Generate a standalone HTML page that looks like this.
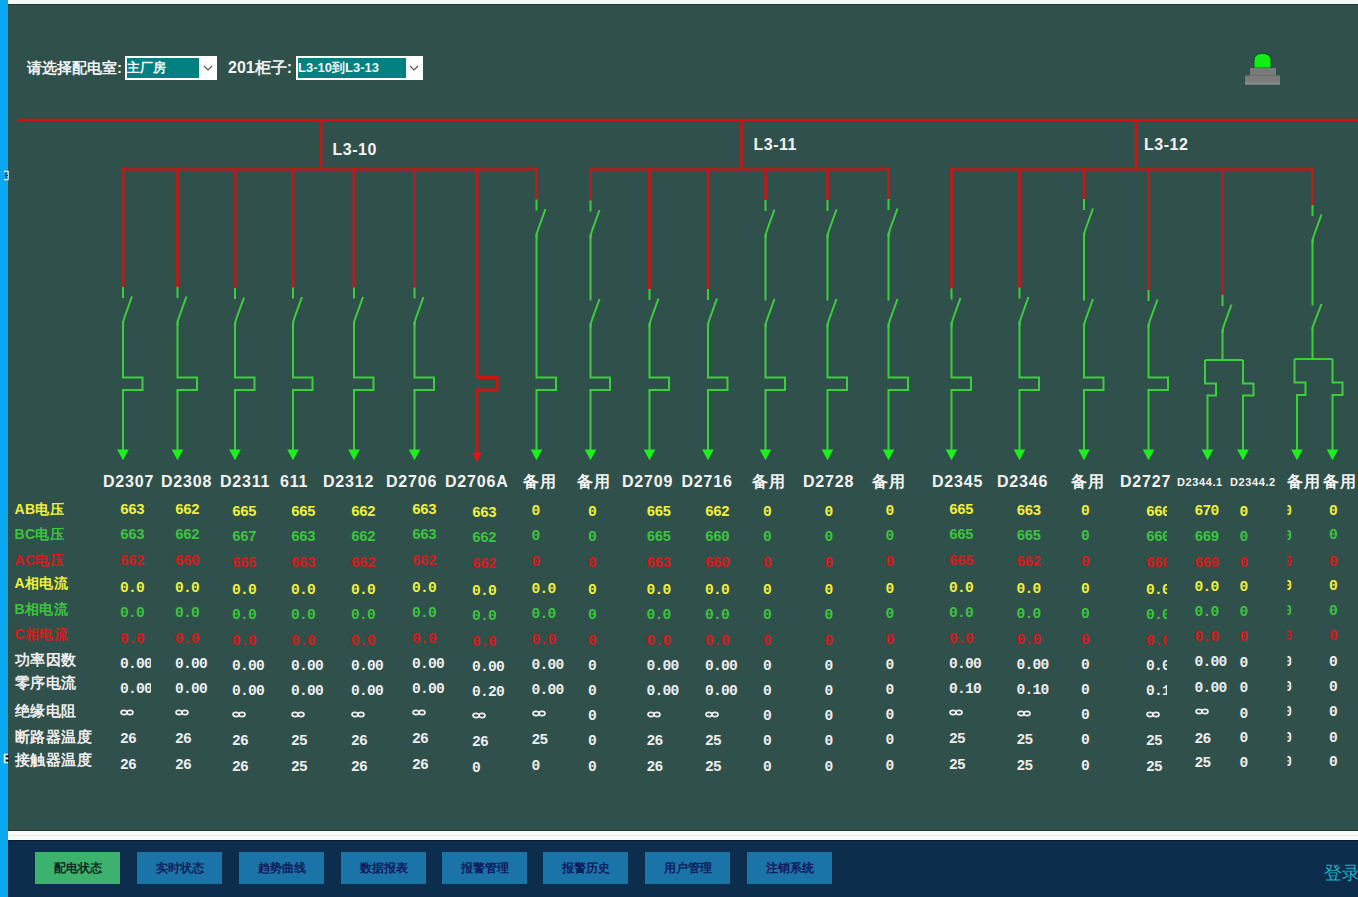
<!DOCTYPE html>
<html><head><meta charset="utf-8"><title>配电状态</title>
<style>
html,body{margin:0;padding:0}
body{width:1358px;height:897px;overflow:hidden;position:relative;background:#30504c;font-family:"Liberation Sans",sans-serif}
.abs{position:absolute}
#lbar{position:absolute;left:0;top:0;width:8px;height:897px;background:#0aa8ee}
#topw{position:absolute;left:8px;top:0;width:1350px;height:4px;background:#f4f8f8}
#topd{position:absolute;left:8px;top:4px;width:1350px;height:1px;background:#1c3a36}
.sel-l{position:absolute;top:58px;height:20px;line-height:20px;color:#f2f2f2;font-size:16px;font-weight:bold;white-space:nowrap}
.sel{position:absolute;top:56px;height:24px;background:#fff;box-sizing:border-box}
.sel .in{position:absolute;left:2px;top:2px;height:20px;background:#008080;color:#f4f4f4;font-size:13px;font-weight:bold;line-height:20px;white-space:nowrap;overflow:hidden}
.sel .ar{position:absolute;right:0;top:0;width:18px;height:24px}
.dg{position:absolute;left:0;top:0}
.bl{position:absolute;color:#f4f4f4;font-size:16px;letter-spacing:0.5px;font-weight:bold;line-height:20px;white-space:nowrap}
.fl{position:absolute;top:472px;letter-spacing:0.8px;color:#f4f4f4;font-size:16px;font-weight:bold;line-height:20px;white-space:nowrap}
.fl.s{font-size:11px;top:471.5px;letter-spacing:0.6px}
.rl{position:absolute;left:14.5px;letter-spacing:0.6px;height:18px;line-height:18px;font-size:14.5px;font-weight:bold;white-space:nowrap}
.v{position:absolute;height:18px;line-height:18px;font-family:"Liberation Mono",monospace;font-size:14.6px;letter-spacing:-0.75px;font-weight:bold;white-space:nowrap}
.inf svg{position:absolute;left:0;top:4.5px}
.y{color:#f0f03a} .g{color:#3cc43c} .r{color:#d81a1a} .w{color:#eeeeee}
#wstrip{position:absolute;left:8px;top:831px;width:1350px;height:9px;background:#fbfbfb}
#wline{position:absolute;left:8px;top:835px;width:1350px;height:1px;background:#e6eaec}
#nav{position:absolute;left:8px;top:840px;width:1350px;height:57px;background:#0c2d4c}
.btn{position:absolute;top:852px;width:85px;height:32px;background:#1a74a8;color:#0d1a5c;font-size:11.5px;font-weight:bold;text-align:center;line-height:32px}
.btn.on{background:#3cb26e;color:#0c2320}
#login{position:absolute;left:1324px;top:861.5px;color:#22aec4;font-size:18px;line-height:22px;white-space:nowrap}
.tofu .cj{font-size:1em;letter-spacing:0.25em;-webkit-text-stroke:1.8px currentColor}
</style></head><body>
<div id="lbar"></div><div id="topw"></div><div id="topd"></div>
<div class="sel-l" style="left:27px;font-size:15px"><span class="cj">请选择配电室</span>:</div>
<div class="sel" style="left:125px;width:92px"><div class="in" style="width:72px"><span class="cj">主厂房</span></div>
<svg class="ar" viewBox="0 0 18 24"><polyline points="5,10 9,14 13,10" fill="none" stroke="#555" stroke-width="1.2"/></svg></div>
<div class="sel-l" style="left:228px">201<span class="cj">柜子</span>:</div>
<div class="sel" style="left:296px;width:127px"><div class="in" style="width:108px">L3-10<span class="cj">到</span>L3-13</div>
<svg class="ar" viewBox="0 0 18 24"><polyline points="5,10 9,14 13,10" fill="none" stroke="#555" stroke-width="1.2"/></svg></div>
<svg class="abs" style="left:1240px;top:48px" width="46" height="42" viewBox="0 0 46 42">
<path d="M14,20 L14,13 Q14,5.4 22.5,5.4 Q31,5.4 31,13 L31,20 Z" fill="#10f010" stroke="#0c3a2a" stroke-width="0.8"/>
<rect x="10" y="20" width="26" height="7.5" fill="#7a7a78"/>
<rect x="5" y="27.5" width="35" height="9" fill="#7c7c7c"/>
<rect x="5" y="34.5" width="35" height="2" fill="#8a8e96"/>
</svg>
<svg class="dg" width="1358" height="470" viewBox="0 0 1358 470"><line x1="18" y1="120" x2="1358" y2="120" stroke="#d41010" stroke-width="2.4"/><line x1="321" y1="120" x2="321" y2="169" stroke="#cc1414" stroke-width="2.6"/><line x1="741.5" y1="120" x2="741.5" y2="169" stroke="#cc1414" stroke-width="2.6"/><line x1="1136" y1="120" x2="1136" y2="169" stroke="#cc1414" stroke-width="2.6"/><line x1="121" y1="169" x2="538" y2="169" stroke="#a42222" stroke-width="3.4"/><line x1="589" y1="169" x2="889.5" y2="169" stroke="#a42222" stroke-width="3.4"/><line x1="949.5" y1="169" x2="1314" y2="169" stroke="#a42222" stroke-width="3.4"/><line x1="123" y1="169" x2="123" y2="287" stroke="#bf1a1a" stroke-width="2.8"/><line x1="123" y1="287" x2="123" y2="298" stroke="#3ccf3c" stroke-width="2"/><path d="M132,296.5 L124.4,317.5 Q123,321 123,325" fill="none" stroke="#3ccf3c" stroke-width="2"/><polyline points="123,321 123,377.5 142.5,377.5 142.5,390 123,390 123,452" fill="none" stroke="#3ccf3c" stroke-width="2" stroke-linejoin="miter"/><polygon points="117.2,449.5 128.8,449.5 123,460.3" fill="#1cf01c"/><line x1="177.5" y1="169" x2="177.5" y2="287" stroke="#bf1a1a" stroke-width="2.8"/><line x1="177.5" y1="287" x2="177.5" y2="298" stroke="#3ccf3c" stroke-width="2"/><path d="M186.5,296.5 L178.9,317.5 Q177.5,321 177.5,325" fill="none" stroke="#3ccf3c" stroke-width="2"/><polyline points="177.5,321 177.5,377.5 197.0,377.5 197.0,390 177.5,390 177.5,452" fill="none" stroke="#3ccf3c" stroke-width="2" stroke-linejoin="miter"/><polygon points="171.7,449.5 183.3,449.5 177.5,460.3" fill="#1cf01c"/><line x1="235" y1="169" x2="235" y2="288" stroke="#bf1a1a" stroke-width="2.8"/><line x1="235" y1="288" x2="235" y2="299" stroke="#3ccf3c" stroke-width="2"/><path d="M244,297.5 L236.4,318.5 Q235,322 235,326" fill="none" stroke="#3ccf3c" stroke-width="2"/><polyline points="235,322 235,377.5 254.5,377.5 254.5,390 235,390 235,452" fill="none" stroke="#3ccf3c" stroke-width="2" stroke-linejoin="miter"/><polygon points="229.2,449.5 240.8,449.5 235,460.3" fill="#1cf01c"/><line x1="293" y1="169" x2="293" y2="287.5" stroke="#bf1a1a" stroke-width="2.8"/><line x1="293" y1="287.5" x2="293" y2="298.5" stroke="#3ccf3c" stroke-width="2"/><path d="M302,297.0 L294.4,318.0 Q293,321.5 293,325.5" fill="none" stroke="#3ccf3c" stroke-width="2"/><polyline points="293,321.5 293,377.5 312.5,377.5 312.5,390 293,390 293,452" fill="none" stroke="#3ccf3c" stroke-width="2" stroke-linejoin="miter"/><polygon points="287.2,449.5 298.8,449.5 293,460.3" fill="#1cf01c"/><line x1="354" y1="169" x2="354" y2="287.5" stroke="#bf1a1a" stroke-width="2.8"/><line x1="354" y1="287.5" x2="354" y2="298.5" stroke="#3ccf3c" stroke-width="2"/><path d="M363,297.0 L355.4,318.0 Q354,321.5 354,325.5" fill="none" stroke="#3ccf3c" stroke-width="2"/><polyline points="354,321.5 354,377.5 373.5,377.5 373.5,390 354,390 354,452" fill="none" stroke="#3ccf3c" stroke-width="2" stroke-linejoin="miter"/><polygon points="348.2,449.5 359.8,449.5 354,460.3" fill="#1cf01c"/><line x1="414.5" y1="169" x2="414.5" y2="287.5" stroke="#bf1a1a" stroke-width="2.8"/><line x1="414.5" y1="287.5" x2="414.5" y2="298.5" stroke="#3ccf3c" stroke-width="2"/><path d="M423.5,297.0 L415.9,318.0 Q414.5,321.5 414.5,325.5" fill="none" stroke="#3ccf3c" stroke-width="2"/><polyline points="414.5,321.5 414.5,377.5 434.0,377.5 434.0,390 414.5,390 414.5,452" fill="none" stroke="#3ccf3c" stroke-width="2" stroke-linejoin="miter"/><polygon points="408.7,449.5 420.3,449.5 414.5,460.3" fill="#1cf01c"/><line x1="649.5" y1="169" x2="649.5" y2="289" stroke="#bf1a1a" stroke-width="2.8"/><line x1="649.5" y1="289" x2="649.5" y2="300" stroke="#3ccf3c" stroke-width="2"/><path d="M658.5,298.5 L650.9,319.5 Q649.5,323 649.5,327" fill="none" stroke="#3ccf3c" stroke-width="2"/><polyline points="649.5,323 649.5,377.5 669.0,377.5 669.0,390 649.5,390 649.5,452" fill="none" stroke="#3ccf3c" stroke-width="2" stroke-linejoin="miter"/><polygon points="643.7,449.5 655.3,449.5 649.5,460.3" fill="#1cf01c"/><line x1="708" y1="169" x2="708" y2="289" stroke="#bf1a1a" stroke-width="2.8"/><line x1="708" y1="289" x2="708" y2="300" stroke="#3ccf3c" stroke-width="2"/><path d="M717,298.5 L709.4,319.5 Q708,323 708,327" fill="none" stroke="#3ccf3c" stroke-width="2"/><polyline points="708,323 708,377.5 727.5,377.5 727.5,390 708,390 708,452" fill="none" stroke="#3ccf3c" stroke-width="2" stroke-linejoin="miter"/><polygon points="702.2,449.5 713.8,449.5 708,460.3" fill="#1cf01c"/><line x1="951.5" y1="169" x2="951.5" y2="288.5" stroke="#bf1a1a" stroke-width="2.8"/><line x1="951.5" y1="288.5" x2="951.5" y2="299.5" stroke="#3ccf3c" stroke-width="2"/><path d="M960.5,298.0 L952.9,319.0 Q951.5,322.5 951.5,326.5" fill="none" stroke="#3ccf3c" stroke-width="2"/><polyline points="951.5,322.5 951.5,377.5 971.0,377.5 971.0,390 951.5,390 951.5,452" fill="none" stroke="#3ccf3c" stroke-width="2" stroke-linejoin="miter"/><polygon points="945.7,449.5 957.3,449.5 951.5,460.3" fill="#1cf01c"/><line x1="1019.5" y1="169" x2="1019.5" y2="287.5" stroke="#bf1a1a" stroke-width="2.8"/><line x1="1019.5" y1="287.5" x2="1019.5" y2="298.5" stroke="#3ccf3c" stroke-width="2"/><path d="M1028.5,297.0 L1020.9,318.0 Q1019.5,321.5 1019.5,325.5" fill="none" stroke="#3ccf3c" stroke-width="2"/><polyline points="1019.5,321.5 1019.5,377.5 1039.0,377.5 1039.0,390 1019.5,390 1019.5,452" fill="none" stroke="#3ccf3c" stroke-width="2" stroke-linejoin="miter"/><polygon points="1013.7,449.5 1025.3,449.5 1019.5,460.3" fill="#1cf01c"/><line x1="1148.5" y1="169" x2="1148.5" y2="290" stroke="#bf1a1a" stroke-width="2.8"/><line x1="1148.5" y1="290" x2="1148.5" y2="301" stroke="#3ccf3c" stroke-width="2"/><path d="M1157.5,299.5 L1149.9,320.5 Q1148.5,324 1148.5,328" fill="none" stroke="#3ccf3c" stroke-width="2"/><polyline points="1148.5,324 1148.5,377.5 1168.0,377.5 1168.0,390 1148.5,390 1148.5,452" fill="none" stroke="#3ccf3c" stroke-width="2" stroke-linejoin="miter"/><polygon points="1142.7,449.5 1154.3,449.5 1148.5,460.3" fill="#1cf01c"/><line x1="477" y1="169" x2="477" y2="378" stroke="#d01414" stroke-width="2.8"/><polyline points="477,377.5 477,377.5 497,377.5 497,390 477,390 477,452" fill="none" stroke="#d01414" stroke-width="2.8" stroke-linejoin="miter"/><polygon points="472.5,452.5 481.5,452.5 477,462" fill="#f41010"/><line x1="536.5" y1="169" x2="536.5" y2="199.5" stroke="#bf1a1a" stroke-width="2.8"/><line x1="536.5" y1="199.5" x2="536.5" y2="210.5" stroke="#3ccf3c" stroke-width="2"/><path d="M545.5,209.0 L537.9,230.0 Q536.5,233.5 536.5,237.5" fill="none" stroke="#3ccf3c" stroke-width="2"/><polyline points="536.5,233.5 536.5,377.5 556.0,377.5 556.0,390 536.5,390 536.5,452" fill="none" stroke="#3ccf3c" stroke-width="2" stroke-linejoin="miter"/><polygon points="530.7,449.5 542.3,449.5 536.5,460.3" fill="#1cf01c"/><line x1="590.5" y1="169" x2="590.5" y2="200.5" stroke="#bf1a1a" stroke-width="2.8"/><line x1="590.5" y1="200.5" x2="590.5" y2="211.5" stroke="#3ccf3c" stroke-width="2"/><path d="M599.5,210.0 L591.9,231.0 Q590.5,234.5 590.5,238.5" fill="none" stroke="#3ccf3c" stroke-width="2"/><line x1="590.5" y1="234.5" x2="590.5" y2="300.5" stroke="#3ccf3c" stroke-width="2"/><path d="M599.5,299.0 L591.9,320.0 Q590.5,323.5 590.5,327.5" fill="none" stroke="#3ccf3c" stroke-width="2"/><polyline points="590.5,323.5 590.5,377.5 610.0,377.5 610.0,390 590.5,390 590.5,452" fill="none" stroke="#3ccf3c" stroke-width="2" stroke-linejoin="miter"/><polygon points="584.7,449.5 596.3,449.5 590.5,460.3" fill="#1cf01c"/><line x1="765.5" y1="169" x2="765.5" y2="200" stroke="#bf1a1a" stroke-width="2.8"/><line x1="765.5" y1="200" x2="765.5" y2="211" stroke="#3ccf3c" stroke-width="2"/><path d="M774.5,209.5 L766.9,230.5 Q765.5,234 765.5,238" fill="none" stroke="#3ccf3c" stroke-width="2"/><line x1="765.5" y1="234" x2="765.5" y2="300.5" stroke="#3ccf3c" stroke-width="2"/><path d="M774.5,299.0 L766.9,320.0 Q765.5,323.5 765.5,327.5" fill="none" stroke="#3ccf3c" stroke-width="2"/><polyline points="765.5,323.5 765.5,377.5 785.0,377.5 785.0,390 765.5,390 765.5,452" fill="none" stroke="#3ccf3c" stroke-width="2" stroke-linejoin="miter"/><polygon points="759.7,449.5 771.3,449.5 765.5,460.3" fill="#1cf01c"/><line x1="827.5" y1="169" x2="827.5" y2="200" stroke="#bf1a1a" stroke-width="2.8"/><line x1="827.5" y1="200" x2="827.5" y2="211" stroke="#3ccf3c" stroke-width="2"/><path d="M836.5,209.5 L828.9,230.5 Q827.5,234 827.5,238" fill="none" stroke="#3ccf3c" stroke-width="2"/><line x1="827.5" y1="234" x2="827.5" y2="300.5" stroke="#3ccf3c" stroke-width="2"/><path d="M836.5,299.0 L828.9,320.0 Q827.5,323.5 827.5,327.5" fill="none" stroke="#3ccf3c" stroke-width="2"/><polyline points="827.5,323.5 827.5,377.5 847.0,377.5 847.0,390 827.5,390 827.5,452" fill="none" stroke="#3ccf3c" stroke-width="2" stroke-linejoin="miter"/><polygon points="821.7,449.5 833.3,449.5 827.5,460.3" fill="#1cf01c"/><line x1="888.5" y1="169" x2="888.5" y2="199" stroke="#bf1a1a" stroke-width="2.8"/><line x1="888.5" y1="199" x2="888.5" y2="210" stroke="#3ccf3c" stroke-width="2"/><path d="M897.5,208.5 L889.9,229.5 Q888.5,233 888.5,237" fill="none" stroke="#3ccf3c" stroke-width="2"/><line x1="888.5" y1="233" x2="888.5" y2="300.5" stroke="#3ccf3c" stroke-width="2"/><path d="M897.5,299.0 L889.9,320.0 Q888.5,323.5 888.5,327.5" fill="none" stroke="#3ccf3c" stroke-width="2"/><polyline points="888.5,323.5 888.5,377.5 908.0,377.5 908.0,390 888.5,390 888.5,452" fill="none" stroke="#3ccf3c" stroke-width="2" stroke-linejoin="miter"/><polygon points="882.7,449.5 894.3,449.5 888.5,460.3" fill="#1cf01c"/><line x1="1084" y1="169" x2="1084" y2="199" stroke="#bf1a1a" stroke-width="2.8"/><line x1="1084" y1="199" x2="1084" y2="210" stroke="#3ccf3c" stroke-width="2"/><path d="M1093,208.5 L1085.4,229.5 Q1084,233 1084,237" fill="none" stroke="#3ccf3c" stroke-width="2"/><line x1="1084" y1="233" x2="1084" y2="300.5" stroke="#3ccf3c" stroke-width="2"/><path d="M1093,299.0 L1085.4,320.0 Q1084,323.5 1084,327.5" fill="none" stroke="#3ccf3c" stroke-width="2"/><polyline points="1084,323.5 1084,377.5 1103.5,377.5 1103.5,390 1084,390 1084,452" fill="none" stroke="#3ccf3c" stroke-width="2" stroke-linejoin="miter"/><polygon points="1078.2,449.5 1089.8,449.5 1084,460.3" fill="#1cf01c"/><line x1="1222.5" y1="169" x2="1222.5" y2="295" stroke="#bf1a1a" stroke-width="2.8"/><line x1="1222.5" y1="295" x2="1222.5" y2="306" stroke="#3ccf3c" stroke-width="2"/><path d="M1231.5,304.5 L1223.9,325.5 Q1222.5,329 1222.5,333" fill="none" stroke="#3ccf3c" stroke-width="2"/><line x1="1222.5" y1="329" x2="1222.5" y2="360" stroke="#3ccf3c" stroke-width="2"/><line x1="1205" y1="360" x2="1243" y2="360" stroke="#3ccf3c" stroke-width="2"/><polyline points="1205,360 1205,383.5 1216,383.5 1216,395.5 1207.5,395.5 1207.5,451" fill="none" stroke="#3ccf3c" stroke-width="2" stroke-linejoin="miter"/><polygon points="1201.7,449.5 1213.3,449.5 1207.5,460.3" fill="#1cf01c"/><polyline points="1243,360 1243,383.5 1253.5,383.5 1253.5,395.5 1243,395.5 1243,451" fill="none" stroke="#3ccf3c" stroke-width="2" stroke-linejoin="miter"/><polygon points="1237.2,449.5 1248.8,449.5 1243,460.3" fill="#1cf01c"/><line x1="1312.5" y1="169" x2="1312.5" y2="205" stroke="#bf1a1a" stroke-width="2.8"/><line x1="1312.5" y1="205" x2="1312.5" y2="216" stroke="#3ccf3c" stroke-width="2"/><path d="M1321.5,214.5 L1313.9,235.5 Q1312.5,239 1312.5,243" fill="none" stroke="#3ccf3c" stroke-width="2"/><line x1="1312.5" y1="239" x2="1312.5" y2="305.5" stroke="#3ccf3c" stroke-width="2"/><polyline points="1312.5,330.5 1312.5,327.5 1321.5,304.0" fill="none" stroke="#3ccf3c" stroke-width="2" stroke-linejoin="miter"/><line x1="1312.5" y1="328.5" x2="1312.5" y2="359" stroke="#3ccf3c" stroke-width="2"/><line x1="1294.5" y1="359" x2="1332.5" y2="359" stroke="#3ccf3c" stroke-width="2"/><polyline points="1294.5,359 1294.5,382.5 1305.5,382.5 1305.5,395 1297,395 1297,451" fill="none" stroke="#3ccf3c" stroke-width="2" stroke-linejoin="miter"/><polygon points="1291.2,449.5 1302.8,449.5 1297,460.3" fill="#1cf01c"/><polyline points="1332.5,359 1332.5,382.5 1342.5,382.5 1342.5,395 1332.5,395 1332.5,451" fill="none" stroke="#3ccf3c" stroke-width="2" stroke-linejoin="miter"/><polygon points="1326.7,449.5 1338.3,449.5 1332.5,460.3" fill="#1cf01c"/></svg>
<div class="bl" style="left:332.5px;top:139.5px">L3-10</div>
<div class="bl" style="left:753.5px;top:135.3px">L3-11</div>
<div class="bl" style="left:1144px;top:134.5px">L3-12</div>
<div class="fl" style="left:103px">D2307</div><div class="fl" style="left:161px">D2308</div><div class="fl" style="left:220px">D2311</div><div class="fl" style="left:280px">611</div><div class="fl" style="left:323px">D2312</div><div class="fl" style="left:386px">D2706</div><div class="fl" style="left:445px">D2706A</div><div class="fl" style="left:523px"><span class="cj">备用</span></div><div class="fl" style="left:577px"><span class="cj">备用</span></div><div class="fl" style="left:622px">D2709</div><div class="fl" style="left:681.5px">D2716</div><div class="fl" style="left:752px"><span class="cj">备用</span></div><div class="fl" style="left:803px">D2728</div><div class="fl" style="left:872px"><span class="cj">备用</span></div><div class="fl" style="left:932px">D2345</div><div class="fl" style="left:997px">D2346</div><div class="fl" style="left:1071px"><span class="cj">备用</span></div><div class="fl" style="left:1120px">D2727</div><div class="fl s" style="left:1177px">D2344.1</div><div class="fl s" style="left:1230px">D2344.2</div><div class="fl" style="left:1287px"><span class="cj">备用</span></div><div class="fl" style="left:1323px"><span class="cj">备用</span></div>
<div class="rl y" style="top:500.3px;font-size:14px;letter-spacing:0.3px">AB<span class="cj">电压</span></div><div class="rl g" style="top:524.7px;font-size:14px;letter-spacing:0.3px">BC<span class="cj">电压</span></div><div class="rl r" style="top:550.6px;font-size:14px;letter-spacing:0.3px">AC<span class="cj">电压</span></div><div class="rl y" style="top:574.1px;font-size:14px;letter-spacing:0.3px">A<span class="cj">相电流</span></div><div class="rl g" style="top:600.2px;font-size:14px;letter-spacing:0.3px">B<span class="cj">相电流</span></div><div class="rl r" style="top:624.6px;font-size:14px;letter-spacing:0.3px">C<span class="cj">相电流</span></div><div class="rl w" style="top:651.3px"><span class="cj">功率因数</span></div><div class="rl w" style="top:674.4px"><span class="cj">零序电流</span></div><div class="rl w" style="top:701.5px"><span class="cj">绝缘电阻</span></div><div class="rl w" style="top:727.5px"><span class="cj">断路器温度</span></div><div class="rl w" style="top:751.3px"><span class="cj">接触器温度</span></div><div class="v y" style="left:120px;top:500.5px;width:31px;overflow:hidden">663</div><div class="v g" style="left:120px;top:526.3px;width:31px;overflow:hidden">663</div><div class="v r" style="left:120px;top:552.4px;width:31px;overflow:hidden">662</div><div class="v y" style="left:120px;top:578.5px;width:31px;overflow:hidden">0.0</div><div class="v g" style="left:120px;top:604.2px;width:31px;overflow:hidden">0.0</div><div class="v r" style="left:120px;top:630.0px;width:31px;overflow:hidden">0.0</div><div class="v w" style="left:120px;top:655.0px;width:31px;overflow:hidden">0.00</div><div class="v w" style="left:120px;top:680.0px;width:31px;overflow:hidden">0.00</div><div class="v w inf" style="left:120px;top:704.8px;width:31px;overflow:hidden;width:15px"><svg width="15" height="7" viewBox="0 0 15 7"><ellipse cx="4" cy="3.5" rx="3" ry="2.2" fill="none" stroke="#eeeeee" stroke-width="1.7"/><ellipse cx="10" cy="3.5" rx="3" ry="2.2" fill="none" stroke="#eeeeee" stroke-width="1.7"/></svg></div><div class="v w" style="left:120px;top:729.6px;width:31px;overflow:hidden">26</div><div class="v w" style="left:120px;top:755.6px;width:31px;overflow:hidden">26</div><div class="v y" style="left:175px;top:500.5px">662</div><div class="v g" style="left:175px;top:526.3px">662</div><div class="v r" style="left:175px;top:552.4px">660</div><div class="v y" style="left:175px;top:578.5px">0.0</div><div class="v g" style="left:175px;top:604.2px">0.0</div><div class="v r" style="left:175px;top:630.0px">0.0</div><div class="v w" style="left:175px;top:655.0px">0.00</div><div class="v w" style="left:175px;top:680.0px">0.00</div><div class="v w inf" style="left:175px;top:704.8px;width:15px"><svg width="15" height="7" viewBox="0 0 15 7"><ellipse cx="4" cy="3.5" rx="3" ry="2.2" fill="none" stroke="#eeeeee" stroke-width="1.7"/><ellipse cx="10" cy="3.5" rx="3" ry="2.2" fill="none" stroke="#eeeeee" stroke-width="1.7"/></svg></div><div class="v w" style="left:175px;top:729.6px">26</div><div class="v w" style="left:175px;top:755.6px">26</div><div class="v y" style="left:232px;top:502.5px">665</div><div class="v g" style="left:232px;top:528.3px">667</div><div class="v r" style="left:232px;top:554.4px">665</div><div class="v y" style="left:232px;top:580.5px">0.0</div><div class="v g" style="left:232px;top:606.2px">0.0</div><div class="v r" style="left:232px;top:632.0px">0.0</div><div class="v w" style="left:232px;top:657.0px">0.00</div><div class="v w" style="left:232px;top:682.0px">0.00</div><div class="v w inf" style="left:232px;top:706.8px;width:15px"><svg width="15" height="7" viewBox="0 0 15 7"><ellipse cx="4" cy="3.5" rx="3" ry="2.2" fill="none" stroke="#eeeeee" stroke-width="1.7"/><ellipse cx="10" cy="3.5" rx="3" ry="2.2" fill="none" stroke="#eeeeee" stroke-width="1.7"/></svg></div><div class="v w" style="left:232px;top:731.6px">26</div><div class="v w" style="left:232px;top:757.6px">26</div><div class="v y" style="left:291px;top:502.5px">665</div><div class="v g" style="left:291px;top:528.3px">663</div><div class="v r" style="left:291px;top:554.4px">663</div><div class="v y" style="left:291px;top:580.5px">0.0</div><div class="v g" style="left:291px;top:606.2px">0.0</div><div class="v r" style="left:291px;top:632.0px">0.0</div><div class="v w" style="left:291px;top:657.0px">0.00</div><div class="v w" style="left:291px;top:682.0px">0.00</div><div class="v w inf" style="left:291px;top:706.8px;width:15px"><svg width="15" height="7" viewBox="0 0 15 7"><ellipse cx="4" cy="3.5" rx="3" ry="2.2" fill="none" stroke="#eeeeee" stroke-width="1.7"/><ellipse cx="10" cy="3.5" rx="3" ry="2.2" fill="none" stroke="#eeeeee" stroke-width="1.7"/></svg></div><div class="v w" style="left:291px;top:731.6px">25</div><div class="v w" style="left:291px;top:757.6px">25</div><div class="v y" style="left:351px;top:502.5px">662</div><div class="v g" style="left:351px;top:528.3px">662</div><div class="v r" style="left:351px;top:554.4px">662</div><div class="v y" style="left:351px;top:580.5px">0.0</div><div class="v g" style="left:351px;top:606.2px">0.0</div><div class="v r" style="left:351px;top:632.0px">0.0</div><div class="v w" style="left:351px;top:657.0px">0.00</div><div class="v w" style="left:351px;top:682.0px">0.00</div><div class="v w inf" style="left:351px;top:706.8px;width:15px"><svg width="15" height="7" viewBox="0 0 15 7"><ellipse cx="4" cy="3.5" rx="3" ry="2.2" fill="none" stroke="#eeeeee" stroke-width="1.7"/><ellipse cx="10" cy="3.5" rx="3" ry="2.2" fill="none" stroke="#eeeeee" stroke-width="1.7"/></svg></div><div class="v w" style="left:351px;top:731.6px">26</div><div class="v w" style="left:351px;top:757.6px">26</div><div class="v y" style="left:412px;top:500.5px">663</div><div class="v g" style="left:412px;top:526.3px">663</div><div class="v r" style="left:412px;top:552.4px">662</div><div class="v y" style="left:412px;top:578.5px">0.0</div><div class="v g" style="left:412px;top:604.2px">0.0</div><div class="v r" style="left:412px;top:630.0px">0.0</div><div class="v w" style="left:412px;top:655.0px">0.00</div><div class="v w" style="left:412px;top:680.0px">0.00</div><div class="v w inf" style="left:412px;top:704.8px;width:15px"><svg width="15" height="7" viewBox="0 0 15 7"><ellipse cx="4" cy="3.5" rx="3" ry="2.2" fill="none" stroke="#eeeeee" stroke-width="1.7"/><ellipse cx="10" cy="3.5" rx="3" ry="2.2" fill="none" stroke="#eeeeee" stroke-width="1.7"/></svg></div><div class="v w" style="left:412px;top:729.6px">26</div><div class="v w" style="left:412px;top:755.6px">26</div><div class="v y" style="left:472px;top:503.5px">663</div><div class="v g" style="left:472px;top:529.3px">662</div><div class="v r" style="left:472px;top:555.4px">662</div><div class="v y" style="left:472px;top:581.5px">0.0</div><div class="v g" style="left:472px;top:607.2px">0.0</div><div class="v r" style="left:472px;top:633.0px">0.0</div><div class="v w" style="left:472px;top:658.0px">0.00</div><div class="v w" style="left:472px;top:683.0px">0.20</div><div class="v w inf" style="left:472px;top:707.8px;width:15px"><svg width="15" height="7" viewBox="0 0 15 7"><ellipse cx="4" cy="3.5" rx="3" ry="2.2" fill="none" stroke="#eeeeee" stroke-width="1.7"/><ellipse cx="10" cy="3.5" rx="3" ry="2.2" fill="none" stroke="#eeeeee" stroke-width="1.7"/></svg></div><div class="v w" style="left:472px;top:732.6px">26</div><div class="v w" style="left:472px;top:758.6px">0</div><div class="v y" style="left:531.5px;top:501.5px">0</div><div class="v g" style="left:531.5px;top:527.3px">0</div><div class="v r" style="left:531.5px;top:553.4px">0</div><div class="v y" style="left:531.5px;top:579.5px">0.0</div><div class="v g" style="left:531.5px;top:605.2px">0.0</div><div class="v r" style="left:531.5px;top:631.0px">0.0</div><div class="v w" style="left:531.5px;top:656.0px">0.00</div><div class="v w" style="left:531.5px;top:681.0px">0.00</div><div class="v w inf" style="left:531.5px;top:705.8px;width:15px"><svg width="15" height="7" viewBox="0 0 15 7"><ellipse cx="4" cy="3.5" rx="3" ry="2.2" fill="none" stroke="#eeeeee" stroke-width="1.7"/><ellipse cx="10" cy="3.5" rx="3" ry="2.2" fill="none" stroke="#eeeeee" stroke-width="1.7"/></svg></div><div class="v w" style="left:531.5px;top:730.6px">25</div><div class="v w" style="left:531.5px;top:756.6px">0</div><div class="v y" style="left:588px;top:502.5px">0</div><div class="v g" style="left:588px;top:528.3px">0</div><div class="v r" style="left:588px;top:554.4px">0</div><div class="v y" style="left:588px;top:580.5px">0</div><div class="v g" style="left:588px;top:606.2px">0</div><div class="v r" style="left:588px;top:632.0px">0</div><div class="v w" style="left:588px;top:657.0px">0</div><div class="v w" style="left:588px;top:682.0px">0</div><div class="v w" style="left:588px;top:706.8px">0</div><div class="v w" style="left:588px;top:731.6px">0</div><div class="v w" style="left:588px;top:757.6px">0</div><div class="v y" style="left:646.5px;top:502.5px">665</div><div class="v g" style="left:646.5px;top:528.3px">665</div><div class="v r" style="left:646.5px;top:554.4px">663</div><div class="v y" style="left:646.5px;top:580.5px">0.0</div><div class="v g" style="left:646.5px;top:606.2px">0.0</div><div class="v r" style="left:646.5px;top:632.0px">0.0</div><div class="v w" style="left:646.5px;top:657.0px">0.00</div><div class="v w" style="left:646.5px;top:682.0px">0.00</div><div class="v w inf" style="left:646.5px;top:706.8px;width:15px"><svg width="15" height="7" viewBox="0 0 15 7"><ellipse cx="4" cy="3.5" rx="3" ry="2.2" fill="none" stroke="#eeeeee" stroke-width="1.7"/><ellipse cx="10" cy="3.5" rx="3" ry="2.2" fill="none" stroke="#eeeeee" stroke-width="1.7"/></svg></div><div class="v w" style="left:646.5px;top:731.6px">26</div><div class="v w" style="left:646.5px;top:757.6px">26</div><div class="v y" style="left:705px;top:502.5px">662</div><div class="v g" style="left:705px;top:528.3px">660</div><div class="v r" style="left:705px;top:554.4px">660</div><div class="v y" style="left:705px;top:580.5px">0.0</div><div class="v g" style="left:705px;top:606.2px">0.0</div><div class="v r" style="left:705px;top:632.0px">0.0</div><div class="v w" style="left:705px;top:657.0px">0.00</div><div class="v w" style="left:705px;top:682.0px">0.00</div><div class="v w inf" style="left:705px;top:706.8px;width:15px"><svg width="15" height="7" viewBox="0 0 15 7"><ellipse cx="4" cy="3.5" rx="3" ry="2.2" fill="none" stroke="#eeeeee" stroke-width="1.7"/><ellipse cx="10" cy="3.5" rx="3" ry="2.2" fill="none" stroke="#eeeeee" stroke-width="1.7"/></svg></div><div class="v w" style="left:705px;top:731.6px">25</div><div class="v w" style="left:705px;top:757.6px">25</div><div class="v y" style="left:763px;top:502.5px">0</div><div class="v g" style="left:763px;top:528.3px">0</div><div class="v r" style="left:763px;top:554.4px">0</div><div class="v y" style="left:763px;top:580.5px">0</div><div class="v g" style="left:763px;top:606.2px">0</div><div class="v r" style="left:763px;top:632.0px">0</div><div class="v w" style="left:763px;top:657.0px">0</div><div class="v w" style="left:763px;top:682.0px">0</div><div class="v w" style="left:763px;top:706.8px">0</div><div class="v w" style="left:763px;top:731.6px">0</div><div class="v w" style="left:763px;top:757.6px">0</div><div class="v y" style="left:824.5px;top:502.5px">0</div><div class="v g" style="left:824.5px;top:528.3px">0</div><div class="v r" style="left:824.5px;top:554.4px">0</div><div class="v y" style="left:824.5px;top:580.5px">0</div><div class="v g" style="left:824.5px;top:606.2px">0</div><div class="v r" style="left:824.5px;top:632.0px">0</div><div class="v w" style="left:824.5px;top:657.0px">0</div><div class="v w" style="left:824.5px;top:682.0px">0</div><div class="v w" style="left:824.5px;top:706.8px">0</div><div class="v w" style="left:824.5px;top:731.6px">0</div><div class="v w" style="left:824.5px;top:757.6px">0</div><div class="v y" style="left:885.5px;top:501.5px">0</div><div class="v g" style="left:885.5px;top:527.3px">0</div><div class="v r" style="left:885.5px;top:553.4px">0</div><div class="v y" style="left:885.5px;top:579.5px">0</div><div class="v g" style="left:885.5px;top:605.2px">0</div><div class="v r" style="left:885.5px;top:631.0px">0</div><div class="v w" style="left:885.5px;top:656.0px">0</div><div class="v w" style="left:885.5px;top:681.0px">0</div><div class="v w" style="left:885.5px;top:705.8px">0</div><div class="v w" style="left:885.5px;top:730.6px">0</div><div class="v w" style="left:885.5px;top:756.6px">0</div><div class="v y" style="left:949px;top:500.5px">665</div><div class="v g" style="left:949px;top:526.3px">665</div><div class="v r" style="left:949px;top:552.4px">665</div><div class="v y" style="left:949px;top:578.5px">0.0</div><div class="v g" style="left:949px;top:604.2px">0.0</div><div class="v r" style="left:949px;top:630.0px">0.0</div><div class="v w" style="left:949px;top:655.0px">0.00</div><div class="v w" style="left:949px;top:680.0px">0.10</div><div class="v w inf" style="left:949px;top:704.8px;width:15px"><svg width="15" height="7" viewBox="0 0 15 7"><ellipse cx="4" cy="3.5" rx="3" ry="2.2" fill="none" stroke="#eeeeee" stroke-width="1.7"/><ellipse cx="10" cy="3.5" rx="3" ry="2.2" fill="none" stroke="#eeeeee" stroke-width="1.7"/></svg></div><div class="v w" style="left:949px;top:729.6px">25</div><div class="v w" style="left:949px;top:755.6px">25</div><div class="v y" style="left:1016.5px;top:501.5px">663</div><div class="v g" style="left:1016.5px;top:527.3px">665</div><div class="v r" style="left:1016.5px;top:553.4px">662</div><div class="v y" style="left:1016.5px;top:579.5px">0.0</div><div class="v g" style="left:1016.5px;top:605.2px">0.0</div><div class="v r" style="left:1016.5px;top:631.0px">0.0</div><div class="v w" style="left:1016.5px;top:656.0px">0.00</div><div class="v w" style="left:1016.5px;top:681.0px">0.10</div><div class="v w inf" style="left:1016.5px;top:705.8px;width:15px"><svg width="15" height="7" viewBox="0 0 15 7"><ellipse cx="4" cy="3.5" rx="3" ry="2.2" fill="none" stroke="#eeeeee" stroke-width="1.7"/><ellipse cx="10" cy="3.5" rx="3" ry="2.2" fill="none" stroke="#eeeeee" stroke-width="1.7"/></svg></div><div class="v w" style="left:1016.5px;top:730.6px">25</div><div class="v w" style="left:1016.5px;top:756.6px">25</div><div class="v y" style="left:1081px;top:501.5px">0</div><div class="v g" style="left:1081px;top:527.3px">0</div><div class="v r" style="left:1081px;top:553.4px">0</div><div class="v y" style="left:1081px;top:579.5px">0</div><div class="v g" style="left:1081px;top:605.2px">0</div><div class="v r" style="left:1081px;top:631.0px">0</div><div class="v w" style="left:1081px;top:656.0px">0</div><div class="v w" style="left:1081px;top:681.0px">0</div><div class="v w" style="left:1081px;top:705.8px">0</div><div class="v w" style="left:1081px;top:730.6px">0</div><div class="v w" style="left:1081px;top:756.6px">0</div><div class="v y" style="left:1146px;top:502.5px;width:21px;overflow:hidden">660</div><div class="v g" style="left:1146px;top:528.3px;width:21px;overflow:hidden">660</div><div class="v r" style="left:1146px;top:554.4px;width:21px;overflow:hidden">660</div><div class="v y" style="left:1146px;top:580.5px;width:21px;overflow:hidden">0.0</div><div class="v g" style="left:1146px;top:606.2px;width:21px;overflow:hidden">0.0</div><div class="v r" style="left:1146px;top:632.0px;width:21px;overflow:hidden">0.0</div><div class="v w" style="left:1146px;top:657.0px;width:21px;overflow:hidden">0.00</div><div class="v w" style="left:1146px;top:682.0px;width:21px;overflow:hidden">0.10</div><div class="v w inf" style="left:1146px;top:706.8px;width:21px;overflow:hidden;width:15px"><svg width="15" height="7" viewBox="0 0 15 7"><ellipse cx="4" cy="3.5" rx="3" ry="2.2" fill="none" stroke="#eeeeee" stroke-width="1.7"/><ellipse cx="10" cy="3.5" rx="3" ry="2.2" fill="none" stroke="#eeeeee" stroke-width="1.7"/></svg></div><div class="v w" style="left:1146px;top:731.6px;width:21px;overflow:hidden">25</div><div class="v w" style="left:1146px;top:757.6px;width:21px;overflow:hidden">25</div><div class="v y" style="left:1194.5px;top:501.7px">670</div><div class="v g" style="left:1194.5px;top:527.6px">669</div><div class="v r" style="left:1194.5px;top:553.5px">669</div><div class="v y" style="left:1194.5px;top:577.7px">0.0</div><div class="v g" style="left:1194.5px;top:602.8px">0.0</div><div class="v r" style="left:1194.5px;top:627.5px">0.0</div><div class="v w" style="left:1194.5px;top:653.0px">0.00</div><div class="v w" style="left:1194.5px;top:678.7px">0.00</div><div class="v w inf" style="left:1194.5px;top:703.8px;width:15px"><svg width="15" height="7" viewBox="0 0 15 7"><ellipse cx="4" cy="3.5" rx="3" ry="2.2" fill="none" stroke="#eeeeee" stroke-width="1.7"/><ellipse cx="10" cy="3.5" rx="3" ry="2.2" fill="none" stroke="#eeeeee" stroke-width="1.7"/></svg></div><div class="v w" style="left:1194.5px;top:729.6px">26</div><div class="v w" style="left:1194.5px;top:754.0px">25</div><div class="v y" style="left:1239.5px;top:503.4px">0</div><div class="v g" style="left:1239.5px;top:527.6px">0</div><div class="v r" style="left:1239.5px;top:553.5px">0</div><div class="v y" style="left:1239.5px;top:577.7px">0</div><div class="v g" style="left:1239.5px;top:602.8px">0</div><div class="v r" style="left:1239.5px;top:627.5px">0</div><div class="v w" style="left:1239.5px;top:654.0px">0</div><div class="v w" style="left:1239.5px;top:678.7px">0</div><div class="v w" style="left:1239.5px;top:705.0px">0</div><div class="v w" style="left:1239.5px;top:729.0px">0</div><div class="v w" style="left:1239.5px;top:754.0px">0</div><div class="v y" style="left:1283.5px;top:501.7px;clip-path:inset(0 0 0 4px)">0</div><div class="v g" style="left:1283.5px;top:526.7px;clip-path:inset(0 0 0 4px)">0</div><div class="v r" style="left:1283.5px;top:552.7px;clip-path:inset(0 0 0 4px)">0</div><div class="v y" style="left:1283.5px;top:576.9px;clip-path:inset(0 0 0 4px)">0</div><div class="v g" style="left:1283.5px;top:601.9px;clip-path:inset(0 0 0 4px)">0</div><div class="v r" style="left:1283.5px;top:626.6px;clip-path:inset(0 0 0 4px)">0</div><div class="v w" style="left:1283.5px;top:653.0px;clip-path:inset(0 0 0 4px)">0</div><div class="v w" style="left:1283.5px;top:677.7px;clip-path:inset(0 0 0 4px)">0</div><div class="v w" style="left:1283.5px;top:703.0px;clip-path:inset(0 0 0 4px)">0</div><div class="v w" style="left:1283.5px;top:728.5px;clip-path:inset(0 0 0 4px)">0</div><div class="v w" style="left:1283.5px;top:753.3px;clip-path:inset(0 0 0 4px)">0</div><div class="v y" style="left:1329px;top:501.7px">0</div><div class="v g" style="left:1329px;top:525.9px">0</div><div class="v r" style="left:1329px;top:552.7px">0</div><div class="v y" style="left:1329px;top:576.9px">0</div><div class="v g" style="left:1329px;top:601.9px">0</div><div class="v r" style="left:1329px;top:626.6px">0</div><div class="v w" style="left:1329px;top:653.0px">0</div><div class="v w" style="left:1329px;top:677.7px">0</div><div class="v w" style="left:1329px;top:703.0px">0</div><div class="v w" style="left:1329px;top:728.5px">0</div><div class="v w" style="left:1329px;top:753.3px">0</div>
<div id="wstrip"></div><div id="wline"></div><div id="nav"></div><div class="abs" style="left:8px;top:830px;width:1350px;height:1px;background:#1c3634"></div><div class="abs" style="left:8px;top:840px;width:1350px;height:1px;background:#071c30"></div>
<svg class="abs" style="left:3px;top:170px" width="6" height="11" viewBox="0 0 6 11"><path d="M1,1.5 H5 V9.5 H1" fill="none" stroke="#e8f4fa" stroke-width="1.5"/><path d="M2,5.5 H5" stroke="#0a2a48" stroke-width="1.5"/><path d="M2,3 H4.5 M2,8 H4.5" stroke="#0a2a48" stroke-width="1.2"/></svg>
<svg class="abs" style="left:3px;top:753px" width="6" height="11" viewBox="0 0 6 11"><path d="M5,1.5 H1.5 V9.5 H5 M1.5,5.5 H5" fill="none" stroke="#e8f4fa" stroke-width="1.4"/><path d="M3,3.3 H6 M3,7.6 H6" stroke="#101820" stroke-width="1.6"/></svg>
<div class="btn on" style="left:35px"><span class="cj">配电状态</span></div>
<div class="btn" style="left:137px"><span class="cj">实时状态</span></div>
<div class="btn" style="left:239px"><span class="cj">趋势曲线</span></div>
<div class="btn" style="left:341px"><span class="cj">数据报表</span></div>
<div class="btn" style="left:442px"><span class="cj">报警管理</span></div>
<div class="btn" style="left:543px"><span class="cj">报警历史</span></div>
<div class="btn" style="left:645px"><span class="cj">用户管理</span></div>
<div class="btn" style="left:747px"><span class="cj">注销系统</span></div>
<div id="login"><span class="cj">登录</span></div>
<script>
(function(){try{var c=document.createElement('canvas');c.width=48;c.height=48;var x=c.getContext('2d');
function g(ch){x.clearRect(0,0,48,48);x.fillStyle='#000';x.font='bold 32px "Liberation Sans", sans-serif';x.fillText(ch,4,38);return Array.prototype.join.call(x.getImageData(0,0,48,48).data,',');}
if(g('\u7535')===g('\u538b')){document.documentElement.className+=' tofu';}}catch(e){}})();
</script>
</body></html>
